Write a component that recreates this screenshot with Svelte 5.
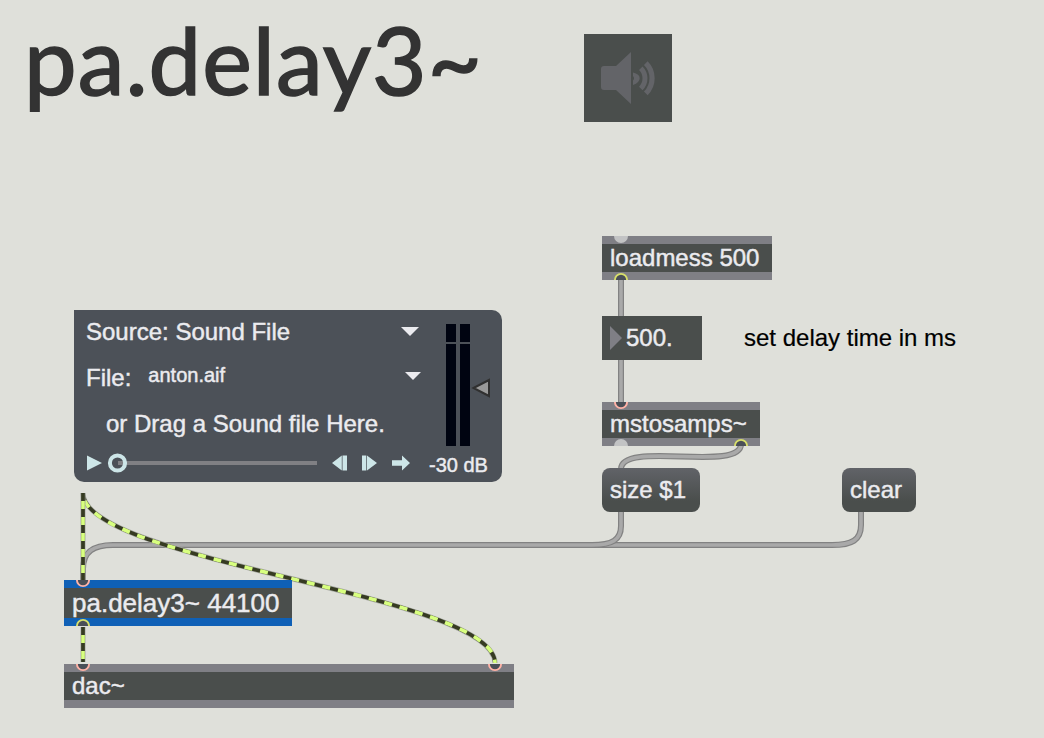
<script>
  const nodes = [
    { text: 'loadmess 500', x: 602, y: 236, w: 170, h: 44, ports: [['in', 'plain', 19], ['out', 'hot', 19]] },
    { text: 'mstosamps~', x: 602, y: 402, w: 158, h: 44, ports: [['in', 'linked', 19], ['out', 'plain', 19], ['out', 'hot', 139]] },
    { text: 'pa.delay3~ 44100', x: 64, y: 580, w: 228, h: 46, selected: true, ports: [['in', 'linked', 19], ['out', 'hot', 19]] },
    { text: 'dac~', x: 64, y: 664, w: 450, h: 44, ports: [['in', 'linked', 19], ['in', 'linked', 431]] }
  ];
  const messages = [
    { text: 'size $1', x: 602, y: 468, w: 98 },
    { text: 'clear', x: 842, y: 468, w: 74 }
  ];
  const cords = [
    'M621 280V316',
    'M621 360V402',
    'M741 444C741 473 621 440 621 469',
    'M861 511V525C861 540 852 545 832 545H113C94 545 83 551 83 569V580',
    'M621 511V526C621 540 612 545 592 545H580'
  ];
  const signals = [
    'M83 493C83 562 495 594 495 663',
    'M83 493V580',
    'M83 627V662'
  ];
</script>

<main>
  <svg class="cords" width="1044" height="738" viewBox="0 0 1044 738">
    {#each cords as d}
      <path {d} class="edge" />
      <path {d} class="core" />
    {/each}
    {#each signals as d}
      <path {d} class="halo" />
      <path {d} class="dark" />
      <path {d} class="dash" />
    {/each}
  </svg>

  <h1>pa.delay3~</h1>

  <button class="dac" aria-label="Audio on or off">
    <svg width="88" height="88" viewBox="0 0 88 88">
      <path d="M20 32H32L47 18V70L32 56H20Q17 56 17 53V35Q17 32 20 32Z" fill="#636468" />
      <path d="M49 38.6Q55.7 40 55.7 44.3Q55.7 48.6 49 51V46.5Q51 44.3 49 42Z" fill="#636468" />
      <g fill="none" stroke="#636468">
        <path d="M56.8 34.2A14.3 14.3 0 0 1 56.8 54.4" stroke-width="5" />
        <path d="M61.8 29.2A21.3 21.3 0 0 1 61.8 59.4" stroke-width="5.2" />
      </g>
    </svg>
  </button>

  {#each nodes as n}
    <div class="node" class:selected={n.selected} style="left:{n.x}px;top:{n.y}px;width:{n.w}px;height:{n.h}px">
      <span>{n.text}</span>
      {#each n.ports as [side, kind, x]}
        <svg class="port {side} {kind}" style="left:{x - 8}px" width="16" height="8" viewBox="0 0 16 8">
          <circle cx="8" cy={side === 'in' ? 0 : 8} r={kind === 'plain' ? 7 : 6.1} />
        </svg>
      {/each}
    </div>
  {/each}

  {#each messages as m}
    <div class="message" style="left:{m.x}px;top:{m.y}px;width:{m.w}px">{m.text}</div>
  {/each}

  <div class="number">
    <svg width="12" height="24" viewBox="0 0 12 24"><path d="M0 0L12 12L0 24Z" fill="#7f7f85" /></svg>
    <span>500.</span>
  </div>
  <p class="comment">set delay time in ms</p>

  <section class="player">
    <div class="controls">
      <div class="row source">
        <span>Source: Sound File</span>
        <svg width="18" height="9" viewBox="0 0 18 9"><path d="M0 0H18L9 9Z" fill="#ebebef" /></svg>
      </div>
      <div class="row file">
        <span>File:</span><span class="name">anton.aif</span>
        <svg width="16" height="8" viewBox="0 0 16 8"><path d="M0 0H16L8 8Z" fill="#ebebef" /></svg>
      </div>
      <div class="row drop">or Drag a Sound file Here.</div>
      <svg class="transport" width="340" height="24" viewBox="0 0 340 24" fill="#cde6e8">
        <path d="M1 4.500L16 12L1 19.500Z" />
        <path d="M32 12H231" stroke="#808084" stroke-width="4" />
        <circle cx="31.500" cy="12" r="7.600" fill="none" stroke="#cde6e8" stroke-width="4" />
        <path d="M246 12L255.800 4.500V19.500ZM256.500 4.500H261V19.500H256.500Z" />
        <path d="M276 4.500H280.300V19.500H276ZM281 4.500L291 12L281 19.500Z" />
        <path d="M306 9.200H316V4.500L324 12L316 19.500V14.800H306Z" />
      </svg>
    </div>
    <div class="output">
      <svg width="48" height="122" viewBox="0 0 48 122">
        <path d="M0 0H10V18H0ZM14 0H24V18H14ZM0 20H10V122H0ZM14 20H24V122H14Z" fill="#000411" />
        <path d="M27.500 64L43 56V72Z" fill="#999" stroke="#303030" stroke-width="2" />
      </svg>
      <span>-30 dB</span>
    </div>
  </section>
</main>

<style>
  :global(body) { margin: 0; background: #dfe0da; }
  main {
    position: relative;
    width: 1044px;
    height: 738px;
    overflow: hidden;
    background: #dfe0da;
    font-family: "Liberation Sans", Arial, sans-serif;
    font-size: 24px;
    color: #ebebef;
    -webkit-text-stroke: 0.45px currentColor;
  }
  h1 {
    position: absolute;
    left: 24px;
    top: -3px;
    margin: 0;
    font: 400 94px/124px Lato, sans-serif;
    letter-spacing: 1px;
    color: #333;
    white-space: nowrap;
    -webkit-text-stroke: 1.6px #333;
  }
  .cords { position: absolute; left: 0; top: 0; fill: none; }
  .edge { stroke: #828282; stroke-width: 6; }
  .core { stroke: #a9a9a9; stroke-width: 3.6; }
  .halo { stroke: #a6a8a2; stroke-width: 5; }
  .dark { stroke: #363b22; stroke-width: 3.7; }
  .dash { stroke: #d8ff80; stroke-width: 3.7; stroke-dasharray: 8 8; stroke-dashoffset: -8; }
  .dac {
    position: absolute;
    left: 584px;
    top: 34px;
    width: 88px;
    height: 88px;
    padding: 0;
    border: 0;
    background: #4a4e4c;
  }
  .dac svg { display: block; }
  .node {
    position: absolute;
    box-sizing: border-box;
    padding-left: 8px;
    border: solid #7f7f85;
    border-width: 8px 0;
    background: #4a4e4c;
    line-height: 28px;
    white-space: nowrap;
  }
  .node.selected { border-color: #0f60b6; font-size: 26px; line-height: 30px; }
  .port { position: absolute; display: block; overflow: hidden; fill: #4a4f57; stroke-width: 1.9; }
  .in { top: -8px; }
  .out { bottom: -8px; }
  .plain { fill: #c2c3c4; }
  .linked { stroke: #ffb2a6; }
  .hot { stroke: #d8df6a; }
  .message {
    position: absolute;
    box-sizing: border-box;
    height: 44px;
    padding-left: 8px;
    border-radius: 8px;
    background: linear-gradient(#616368, #4a4e4c 75%);
    line-height: 44px;
  }
  .number {
    position: absolute;
    left: 602px;
    top: 316px;
    display: flex;
    align-items: center;
    gap: 4px;
    box-sizing: border-box;
    width: 100px;
    height: 44px;
    padding-left: 8px;
    background: #4a4e4c;
  }
  .comment {
    position: absolute;
    left: 744px;
    top: 324px;
    margin: 0;
    line-height: 28px;
    color: #000;
    white-space: nowrap;
    -webkit-text-stroke: 0.2px #000;
  }
  .player {
    position: absolute;
    left: 74px;
    top: 310px;
    display: flex;
    box-sizing: border-box;
    width: 428px;
    height: 172px;
    padding-left: 12px;
    border-radius: 0 10px 10px 10px;
    background: #4c5158;
  }
  .controls { width: 343px; padding-top: 8px; }
  .row { display: flex; height: 46px; line-height: 28px; white-space: nowrap; }
  .row svg { margin-left: auto; }
  .source svg { margin-top: 9px; margin-right: 10px; }
  .file svg { margin-top: 8px; margin-right: 8px; }
  .name { margin-left: 17px; margin-top: -3px; font-size: 20px; }
  .drop { padding-left: 20px; height: 35px; }
  .transport { display: block; margin-top: 6px; }
  .output { display: flex; flex-direction: column; padding-top: 14px; }
  .output svg { margin-left: 17px; }
  .output span { margin-top: 8px; font-size: 20px; line-height: 22px; white-space: nowrap; }
</style>
